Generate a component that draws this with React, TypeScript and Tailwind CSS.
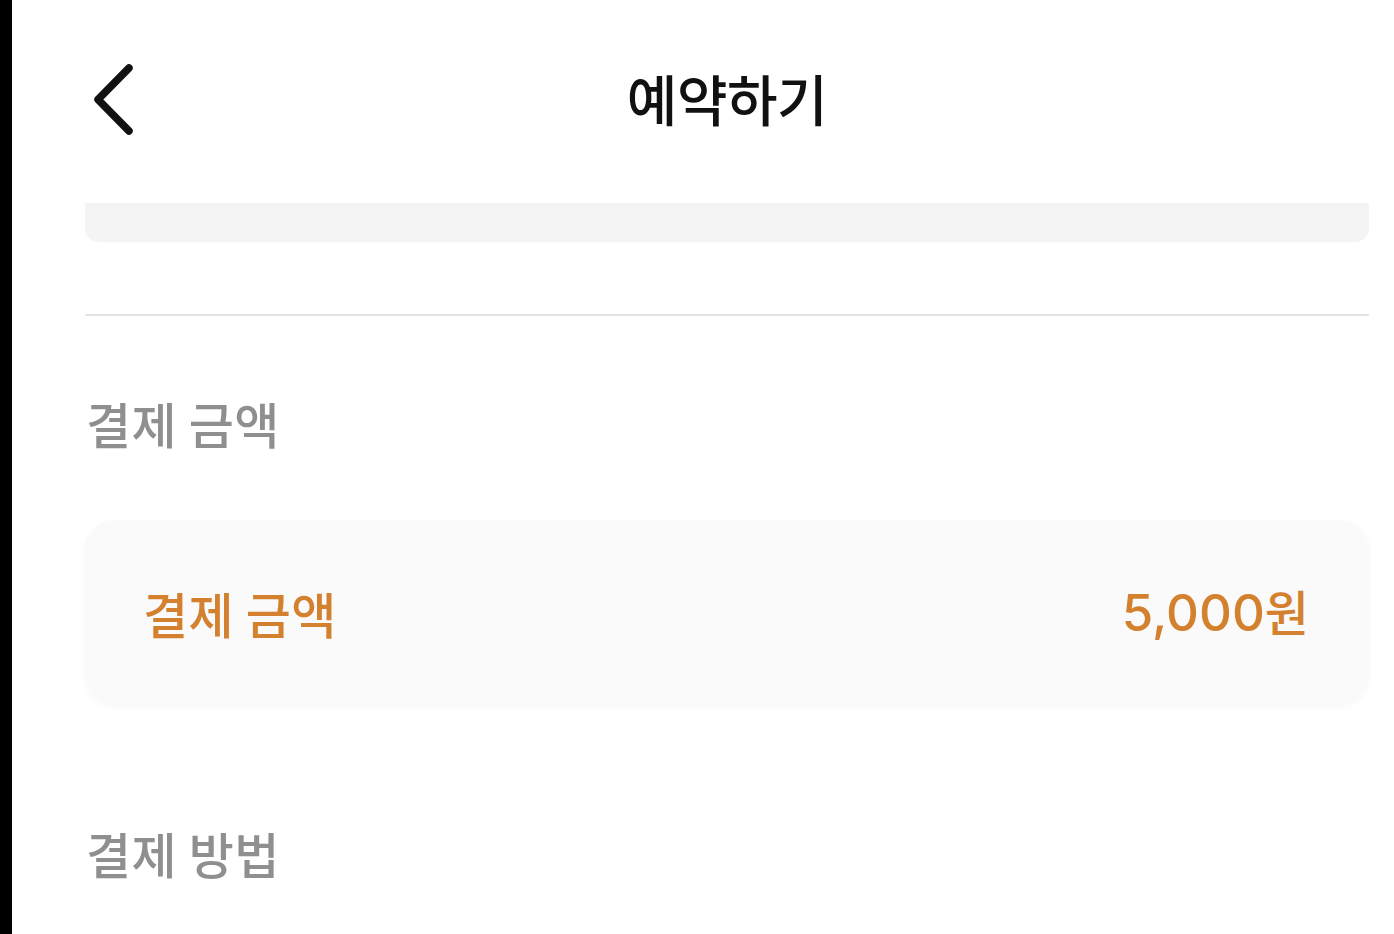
import React from 'react';

const font = { fontFamily: '"Noto Sans CJK KR", "Noto Sans", sans-serif' };
const numFont = { fontFamily: 'Inter, "Noto Sans CJK KR", sans-serif' };

const BackIcon = () => (
    <svg width="46" height="74" viewBox="0 0 46 74" fill="none">
        <path d="M38 5 L7 36.5 L38 68" stroke="#111" strokeWidth="7.5" strokeLinecap="round" strokeLinejoin="round" />
    </svg>
);

export default function App() {
    return (
        <div className="flex h-[934px] w-[1394px] overflow-hidden bg-white" style={font}>
            <div className="w-[12px] shrink-0 bg-black" />
            <div className="flex flex-1 flex-col pl-[73px] pr-[25px]">
                <header className="relative flex h-[203px] shrink-0 items-start justify-center pt-[59px]">
                    <button className="absolute left-[6px] top-[63px]">
                        <BackIcon />
                    </button>
                    <h1 className="text-[55px] font-medium leading-[76px] tracking-[-0.5px] text-[#111]">예약하기</h1>
                </header>

                <div className="h-[39px] rounded-b-[14px] bg-[#f4f4f4]" />

                <div className="mt-[72px] h-[2px] bg-[#e4e4e4]" />

                <h2 className="mt-[75px] pl-[1px] text-[49px] leading-[64px] font-medium tracking-[0.5px] text-[#8f8f8f]">결제 금액</h2>

                <div className="mt-[65px] flex h-[185px] items-center justify-between rounded-[30px] bg-[#fafafa] pl-[58px] pr-[60px] shadow-[0_2px_6px_rgba(0,0,0,0.03)]">
                    <span className="text-[49px] font-medium tracking-[0.5px] text-[#d4812f]">결제 금액</span>
                    <span className="text-[#d4812f]">
                        <span className="text-[51px] font-medium" style={numFont}>5,000</span>
                        <span className="text-[48px] font-medium">원</span>
                    </span>
                </div>

                <h2 className="mt-[116px] pl-[1px] text-[49px] leading-[64px] font-medium tracking-[0.5px] text-[#8f8f8f]">결제 방법</h2>
            </div>
        </div>
    );
}
